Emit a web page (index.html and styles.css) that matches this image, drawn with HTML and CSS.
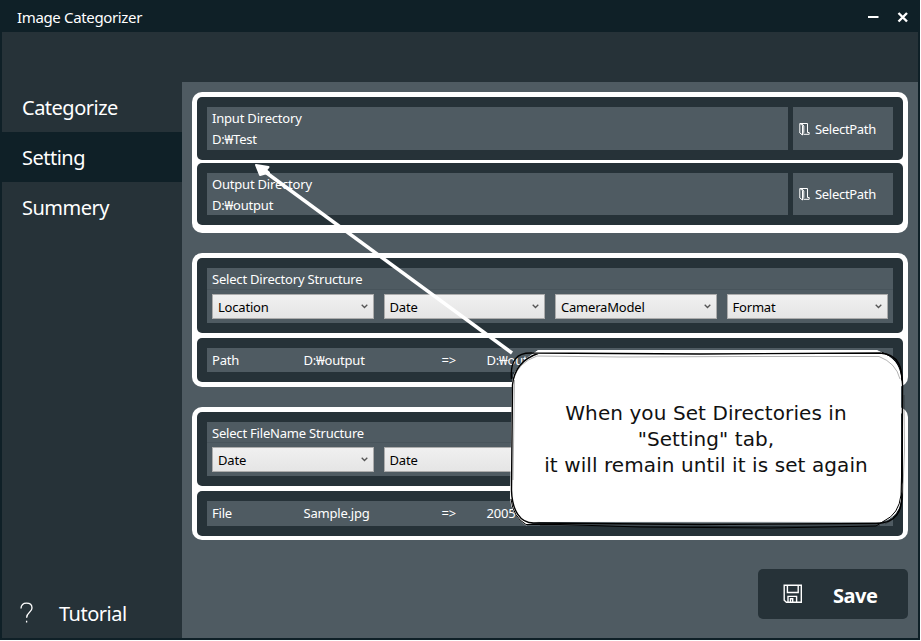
FILE: index.html
```html
<!DOCTYPE html>
<html lang="en">
<head>
<meta charset="utf-8">
<title>Image Categorizer</title>
<link rel="stylesheet" href="styles.css">
</head>
<body>
<div class="window">
  <header class="titlebar">
    <span class="title">Image Categorizer</span>
    <svg class="controls" width="46" height="32" viewBox="0 0 46 32"><path d="M4 17H14.500" stroke-width="2"/><path d="M34.500 13L43 21.500M43 13L34.500 21.500" stroke-width="2.400"/></svg>
  </header>
  <div class="body">
    <nav class="sidebar">
      <a class="nav-item">Categorize</a>
      <a class="nav-item active">Setting</a>
      <a class="nav-item">Summery</a>
      <a class="tutorial">
        <svg width="14" height="22" viewBox="0 0 14 22"><path d="M1 6.500C1 2.800 3.300 1.200 6.400 1.200C9.800 1.200 12 3.200 12 6C12 10.400 6.600 10.200 6.600 15.800M6.600 18.800V20.600"/></svg>
        <span>Tutorial</span>
      </a>
    </nav>
    <main class="content">
      <section class="panel paths">
        <div class="card path-card">
          <div class="field"><span>Input Directory</span><span>D:₩Test</span></div>
          <button class="pick"><svg width="11" height="14" viewBox="0 0 11 14"><path d="M.8 1.500H8.500V10.500H10.200V12.300H4.500M.8 1.500V11L3.500 13V3.500L1 1.500M3.500 12L4.800 10.400V4L3 1.800"/></svg><span>SelectPath</span></button>
        </div>
        <div class="card path-card">
          <div class="field"><span>Output Directory</span><span>D:₩output</span></div>
          <button class="pick"><svg width="11" height="14" viewBox="0 0 11 14"><path d="M.8 1.500H8.500V10.500H10.200V12.300H4.500M.8 1.500V11L3.500 13V3.500L1 1.500M3.500 12L4.800 10.400V4L3 1.800"/></svg><span>SelectPath</span></button>
        </div>
      </section>
      <section class="panel structure directories">
        <div class="card">
          <div class="group">
            <h2>Select Directory Structure</h2>
            <div class="combos">
              <div class="combo">Location<svg width="7" height="5" viewBox="0 0 7 5"><path d="M.7 .7L3.5 3.5L6.3 .7"/></svg></div>
              <div class="combo">Date<svg width="7" height="5" viewBox="0 0 7 5"><path d="M.7 .7L3.5 3.5L6.3 .7"/></svg></div>
              <div class="combo">CameraModel<svg width="7" height="5" viewBox="0 0 7 5"><path d="M.7 .7L3.5 3.5L6.3 .7"/></svg></div>
              <div class="combo">Format<svg width="7" height="5" viewBox="0 0 7 5"><path d="M.7 .7L3.5 3.5L6.3 .7"/></svg></div>
            </div>
          </div>
        </div>
        <div class="card">
          <div class="preview"><span>Path</span><span>D:₩output</span><span>=&gt;</span><span>D:₩output</span></div>
        </div>
      </section>
      <section class="panel structure files">
        <div class="card">
          <div class="group">
            <h2>Select FileName Structure</h2>
            <div class="combos">
              <div class="combo">Date<svg width="7" height="5" viewBox="0 0 7 5"><path d="M.7 .7L3.5 3.5L6.3 .7"/></svg></div>
              <div class="combo">Date</div>
            </div>
          </div>
        </div>
        <div class="card">
          <div class="preview"><span>File</span><span>Sample.jpg</span><span>=&gt;</span><span>2005</span></div>
        </div>
      </section>
      <button class="save">
        <svg width="20" height="20" viewBox="0 0 20 20"><path d="M1.200 1.200H18.300V18.300H3.400L1.200 16.200ZM4.400 1.200V8.500H15.200V1.200M5 18.300V12.400H13.600V18.300M7.500 18.300V14.800H9.700V18.300"/></svg>
        <span>Save</span>
      </button>
    </main>
  </div>
  <div class="callout">
    <svg class="sketch" width="440" height="380" viewBox="250 155 440 380">
      <path class="arrow" d="M264 171L512 353"/>
      <path class="head" d="M256 165L268.500 167L266 170L269 172.500L260 175Z"/>
    </svg>
    <svg class="outline" width="400" height="184" viewBox="506 346 400 184">
      <path class="fill" d="M538 350.500H877L882 353Q899 360 900.500 376V500Q899 518 880 522L540 521.500Q532 522 526 525Q511 514 510.500 498L512.500 382Q513 366 538 350.500Z"/>
      <path class="ink" d="M511.500 379C510 360 517 352.500 532 353L700 354L880 353C899 354 903 368 902.500 388L902 490C903 512 896 523 876 523.500L700 524.500L535 523C520 524 512 510 511.500 490L512.500 385C514 369 522 359 538 353.500"/>
      <path class="ink thin" d="M882 352.500C897 358 901 366 902.500 384L902.500 440L901 495Q899 514 884 521L876 526L770 528L640 527L560 524.500L526 524.500Q513 517 511 499"/>
      <path class="shade" d="M537 356L620 357L740 356.500H879Q896 363 900 379M514 378Q518 363 537 356M514.500 380L513 480M904 395L904.500 450L902.500 500M885 524Q899 519 902 499M540 525.500L720 526.500L880 525.500"/>
    </svg>
    <p>When you Set Directories in<br>"Setting" tab,<br>it will remain until it is set again</p>
  </div>
</div>
</body>
</html>
```
FILE: styles.css
```css
* { box-sizing: border-box; }
body { margin: 0; background: #fff; font-family: "Noto Sans", "Noto Sans CJK KR", sans-serif; font-size: 13px; color: #fff; }
svg { display: block; fill: none; stroke: #fff; flex: none; }
button { border: 0; margin: 0; padding: 0; font: inherit; color: inherit; }
.window { position: relative; width: 920px; height: 640px; background: #0f2027; padding: 0 2px 2px; display: flex; flex-direction: column; overflow: hidden; }
.titlebar { height: 32px; display: flex; align-items: center; justify-content: space-between; padding: 2px 8px 0 15px; }
.title { font-size: 15px; letter-spacing: -.35px; }
.controls { margin-top: -3px; }
.body { flex: 1; display: flex; background: #263238; letter-spacing: -.2px; }
.sidebar { width: 180px; padding-top: 50px; display: flex; flex-direction: column; font-size: 20px; letter-spacing: -.5px; }
.nav-item { height: 50px; padding-left: 20px; line-height: 51px; }
.active { background: #0f2027; }
.tutorial { margin-top: auto; height: 50px; display: flex; align-items: center; gap: 25px; padding-left: 18px; }
.tutorial svg { stroke-width: 1.3; }
.content { flex: 1; margin-top: 50px; background: #4f5b62; padding: 10px 10px 0 10px; display: flex; flex-direction: column; }
.panel { background: #fff; border-radius: 10px; padding: 5px; display: flex; flex-direction: column; }
.paths { height: 141.300px; gap: 3px; }
.structure { height: 133.500px; gap: 5px; }
.directories { margin-top: 20.200px; }
.files { margin-top: 20px; }
.card { background: #263238; border-radius: 5px; padding: 10px; }
.path-card { height: 62.500px; display: flex; gap: 5px; }
.field { flex: 1; background: #4f5b62; padding: 1px 5px; line-height: 21px; display: flex; flex-direction: column; }
.pick { width: 100px; background: #4f5b62; display: flex; align-items: center; gap: 5px; padding: 1px 0 0 6px; letter-spacing: -.3px; }
.pick svg { stroke-width: 1; }
.group { height: 54.500px; background: #4f5b62; }
.group h2 { margin: 0; height: 21.500px; padding-left: 5px; font-size: 13px; font-weight: 400; line-height: 22px; border-bottom: 1px solid #48545b; }
.combos { display: grid; grid-template-columns: repeat(4, 1fr); padding-top: 4px; }
.combo { margin: 0 5px; height: 25px; border: 1px solid #acacac; background: linear-gradient(#f0f0f0, #e5e5e5); color: #000; display: flex; justify-content: space-between; padding: 0 5px; line-height: 24px; }
.combo svg { margin-top: 9px; stroke: #555; stroke-width: 1.3; }
.preview { height: 24.500px; background: #4f5b62; display: grid; grid-template-columns: 91.500px 138px 45px 1fr; padding-left: 5px; line-height: 24px; }
.save { width: 150px; height: 50px; margin: 29px 0 0 auto; border-radius: 5px; background: #263238; display: flex; align-items: center; gap: 30px; padding: 0 0 0 25px; font-size: 20px; font-weight: 700; letter-spacing: -.5px; }
.save span { padding-top: 2px; }
.save svg { stroke-width: 1.4; }
.callout { position: absolute; left: 506px; top: 346px; width: 400px; height: 184px; }
.callout svg { position: absolute; }
.sketch { left: -256px; top: -191px; }
.outline { left: 0; top: 0; }
.arrow { stroke-width: 3.500; }
.head { fill: #fff; stroke-width: 2; stroke-linejoin: round; }
.fill { fill: #fff; stroke: #fff; }
.ink { stroke: #000; stroke-width: 1.400; }
.thin { stroke-width: 1; }
.shade { stroke: #000; stroke-opacity: .3; }
.callout p { position: absolute; left: 0; top: 54px; width: 400px; margin: 0; text-align: center; font: 20px/26px "DejaVu Sans", sans-serif; letter-spacing: .08px; color: #111; }
```
